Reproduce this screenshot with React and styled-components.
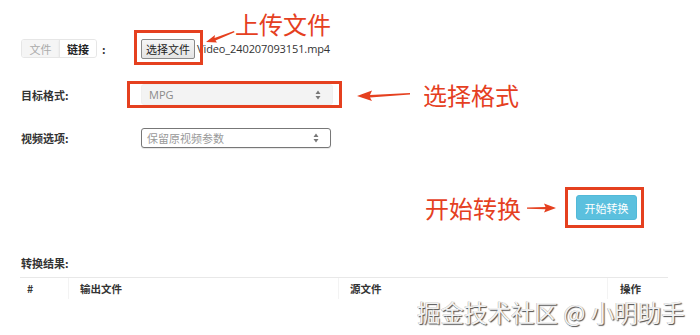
import React from 'react';
import styled, { createGlobalStyle } from 'styled-components';

const Global = createGlobalStyle`
  html, body { margin: 0; padding: 0; background: #fff; }
  body {
    font-family: "Open Sans", "Noto Sans CJK SC", sans-serif;
    font-size: 11px;
    color: #333;
    overflow: hidden;
  }
`;

const RED = '#e5401f';

const Page = styled.div`
  position: relative;
  width: 700px;
  height: 335px;
  box-sizing: border-box;
  padding: 0 32px 0 20px;
  overflow: hidden;
`;

const Row = styled.div`
  display: flex;
  align-items: center;
  height: ${(p) => p.$h}px;
  margin-top: ${(p) => p.$mt}px;
`;

const Label = styled.div`
  width: 121px;
  flex: none;
  display: flex;
  align-items: center;
  font-family: "Noto Sans CJK SC", sans-serif;
  font-weight: 700;
  font-size: 11px;
  color: #333;
  padding-left: 1px;
  box-sizing: border-box;
`;

const Tabs = styled.div`
  display: flex;
  height: 19px;
  border: 1px solid #e6e6e6;
  border-radius: 3px;
  overflow: hidden;
  box-sizing: border-box;
`;

const Tab = styled.div`
  display: flex;
  align-items: center;
  justify-content: center;
  width: ${(p) => p.$w}px;
  background: ${(p) => (p.$active ? '#fff' : '#f5f5f5')};
  color: ${(p) => (p.$active ? '#222' : '#aaa')};
  font-weight: ${(p) => (p.$active ? 700 : 400)};
  font-family: "Noto Sans CJK SC", sans-serif;
  font-size: 11px;
  border-left: ${(p) => (p.$active ? '1px solid #e6e6e6' : 'none')};
  box-shadow: ${(p) => (p.$active ? '0 1px 2px rgba(0,0,0,0.08)' : 'none')};
`;

const Colon = styled.span`
  margin-left: 5px;
  font-weight: 700;
  color: #333;
`;

const Marked = styled.div`
  position: relative;
  display: flex;
  align-items: center;
  &::after {
    content: '';
    position: absolute;
    top: ${(p) => -p.$t}px;
    bottom: ${(p) => -p.$b}px;
    left: ${(p) => -p.$l}px;
    right: ${(p) => -p.$r}px;
    border: 3px solid ${RED};
    pointer-events: none;
    z-index: 2;
  }
`;

const FileField = styled.div`
  position: relative;
  display: flex;
  align-items: center;
  height: 100%;
`;

const FileButton = styled.button`
  height: 20px;
  width: 54px;
  padding: 0;
  font-family: "Noto Sans CJK SC", sans-serif;
  font-size: 11px;
  color: #222;
  background: linear-gradient(#f6f6f6, #e4e4e4);
  border: 1px solid #8a8a8a;
  border-radius: 2px;
`;

const FileName = styled.span`
  margin-left: 2px;
  font-size: 11px;
  color: #333;
  letter-spacing: -0.1px;
`;

const Note = styled.div`
  font-family: "Noto Sans CJK SC", sans-serif;
  font-size: 24px;
  line-height: 24px;
  color: ${RED};
  white-space: nowrap;
`;

const FloatNote = styled(Note)`
  position: absolute;
  left: ${(p) => p.$x}px;
  top: ${(p) => p.$y}px;
`;

const FloatIcon = styled.svg`
  position: absolute;
  left: ${(p) => p.$x}px;
  top: ${(p) => p.$y}px;
  overflow: visible;
`;

const Select = styled.div`
  display: flex;
  align-items: center;
  justify-content: space-between;
  width: ${(p) => p.$w}px;
  height: ${(p) => p.$h}px;
  box-sizing: border-box;
  padding: 0 11px 0 ${(p) => p.$pl}px;
  border-radius: 3px;
  background: ${(p) => (p.$disabled ? '#f3f3f3' : '#fff')};
  border: 1px solid ${(p) => (p.$disabled ? '#efefef' : '#777')};
  color: ${(p) => (p.$disabled ? '#8a8a8a' : '#999')};
  font-family: "Open Sans", "Noto Sans CJK SC", sans-serif;
  font-size: 11px;
  box-shadow: ${(p) => (p.$disabled ? 'none' : '0 1px 1px rgba(0,0,0,0.1)')};
`;

const ArrowSlot = styled.div`
  display: flex;
  align-items: center;
  margin-left: ${(p) => p.$ml}px;
  margin-right: ${(p) => p.$mr}px;
`;

const ActionRow = styled.div`
  display: flex;
  align-items: center;
  justify-content: flex-end;
  height: 25px;
  margin-top: 47px;
  padding-right: 31px;
`;

const StartButton = styled.button`
  width: 61px;
  height: 25px;
  padding: 0;
  border: 1px solid #52b9d8;
  border-radius: 3px;
  background: #5bc0de;
  color: #fff;
  font-family: "Noto Sans CJK SC", sans-serif;
  font-size: 11px;
`;

const SectionTitle = styled.div`
  margin-top: 36px;
  height: 15px;
  line-height: 15px;
  font-family: "Noto Sans CJK SC", sans-serif;
  font-weight: 700;
  font-size: 11px;
  color: #333;
  padding-left: 1px;
`;

const Table = styled.div`
  margin-top: 6px;
  width: 648px;
  border-top: 1px solid #e8e8e8;
  display: grid;
  grid-template-columns: 48px 270px 269px 61px;
`;

const HeadCell = styled.div`
  height: 21px;
  display: flex;
  align-items: center;
  padding-left: ${(p) => p.$pl}px;
  border-left: ${(p) => (p.$first ? 'none' : '1px solid #f3f3f3')};
  font-family: "Noto Sans CJK SC", sans-serif;
  font-weight: 700;
  font-size: 10.5px;
  line-height: 14px;
  color: #333;
`;

const Watermark = styled.div`
  position: absolute;
  left: 417px;
  top: 301px;
  font-family: "Noto Sans CJK SC", sans-serif;
  font-size: 23.5px;
  line-height: 23px;
  color: #f2f2f2;
  white-space: nowrap;
  text-shadow: 1px 1px 1px rgba(0,0,0,0.7), -0.5px -0.5px 0.5px rgba(0,0,0,0.3);
`;

const UpDown = () => (
  <svg width="6" height="10" viewBox="0 0 6 10">
    <path d="M3 0.5 L5.5 4 L0.5 4 Z M3 9.5 L5.5 6 L0.5 6 Z" fill="#777" />
  </svg>
);

const LeftArrow = () => (
  <svg width="54" height="12" viewBox="0 0 54 12">
    <path d="M0 7 L15 1.5 L13 6 L53 4 L53 5.5 L13 8.5 L15 12 Z" fill={RED} />
  </svg>
);

const RightArrow = () => (
  <svg width="30" height="10" viewBox="0 0 30 10">
    <path d="M29 5 L17 0.5 L18.5 4 L0 4.4 L0 5.8 L18.5 6.3 L17 9.5 Z" fill={RED} />
  </svg>
);

export default function App() {
  return (
    <>
      <Global />
      <Page>
        <Row $h={21} $mt={38}>
          <Label>
            <Tabs>
              <Tab $w={37}>文件</Tab>
              <Tab $w={36} $active>链接</Tab>
            </Tabs>
            <Colon>:</Colon>
          </Label>
          <FileField>
            <Marked $t={9} $b={6} $l={7} $r={8}>
              <FileButton>选择文件</FileButton>
            </Marked>
            <FileName>Video_240207093151.mp4</FileName>
            <FloatIcon $x={64} $y={-8} width="30" height="16" viewBox="0 0 30 16">
              <path d="M1 12 L10 5 L9.5 8 L29 1 L29.5 2.3 L10.5 10.5 L12 12.5 Z" fill={RED} />
            </FloatIcon>
            <FloatNote $x={94} $y={-26}>上传文件</FloatNote>
          </FileField>
        </Row>

        <Row $h={21} $mt={25}>
          <Label>目标格式:</Label>
          <Marked $t={3} $b={3} $l={14} $r={9}>
            <Select $w={192} $h={21} $pl={7} $disabled>
              <span>MPG</span>
              <UpDown />
            </Select>
          </Marked>
          <ArrowSlot $ml={24} $mr={12}>
            <LeftArrow />
          </ArrowSlot>
          <Note>选择格式</Note>
        </Row>

        <Row $h={20} $mt={23}>
          <Label>视频选项:</Label>
          <Select $w={190} $h={20} $pl={5}>
            <span>保留原视频参数</span>
            <UpDown />
          </Select>
        </Row>

        <ActionRow>
          <Note>开始转换</Note>
          <ArrowSlot $ml={6} $mr={19}>
            <RightArrow />
          </ArrowSlot>
          <Marked $t={8} $b={8} $l={11} $r={7}>
            <StartButton>开始转换</StartButton>
          </Marked>
        </ActionRow>

        <SectionTitle>转换结果:</SectionTitle>
        <Table>
          <HeadCell $first $pl={7}>#</HeadCell>
          <HeadCell $pl={11}>输出文件</HeadCell>
          <HeadCell $pl={11}>源文件</HeadCell>
          <HeadCell $pl={12}>操作</HeadCell>
        </Table>

        <Watermark>掘金技术社区 @ 小明助手</Watermark>
      </Page>
    </>
  );
}
